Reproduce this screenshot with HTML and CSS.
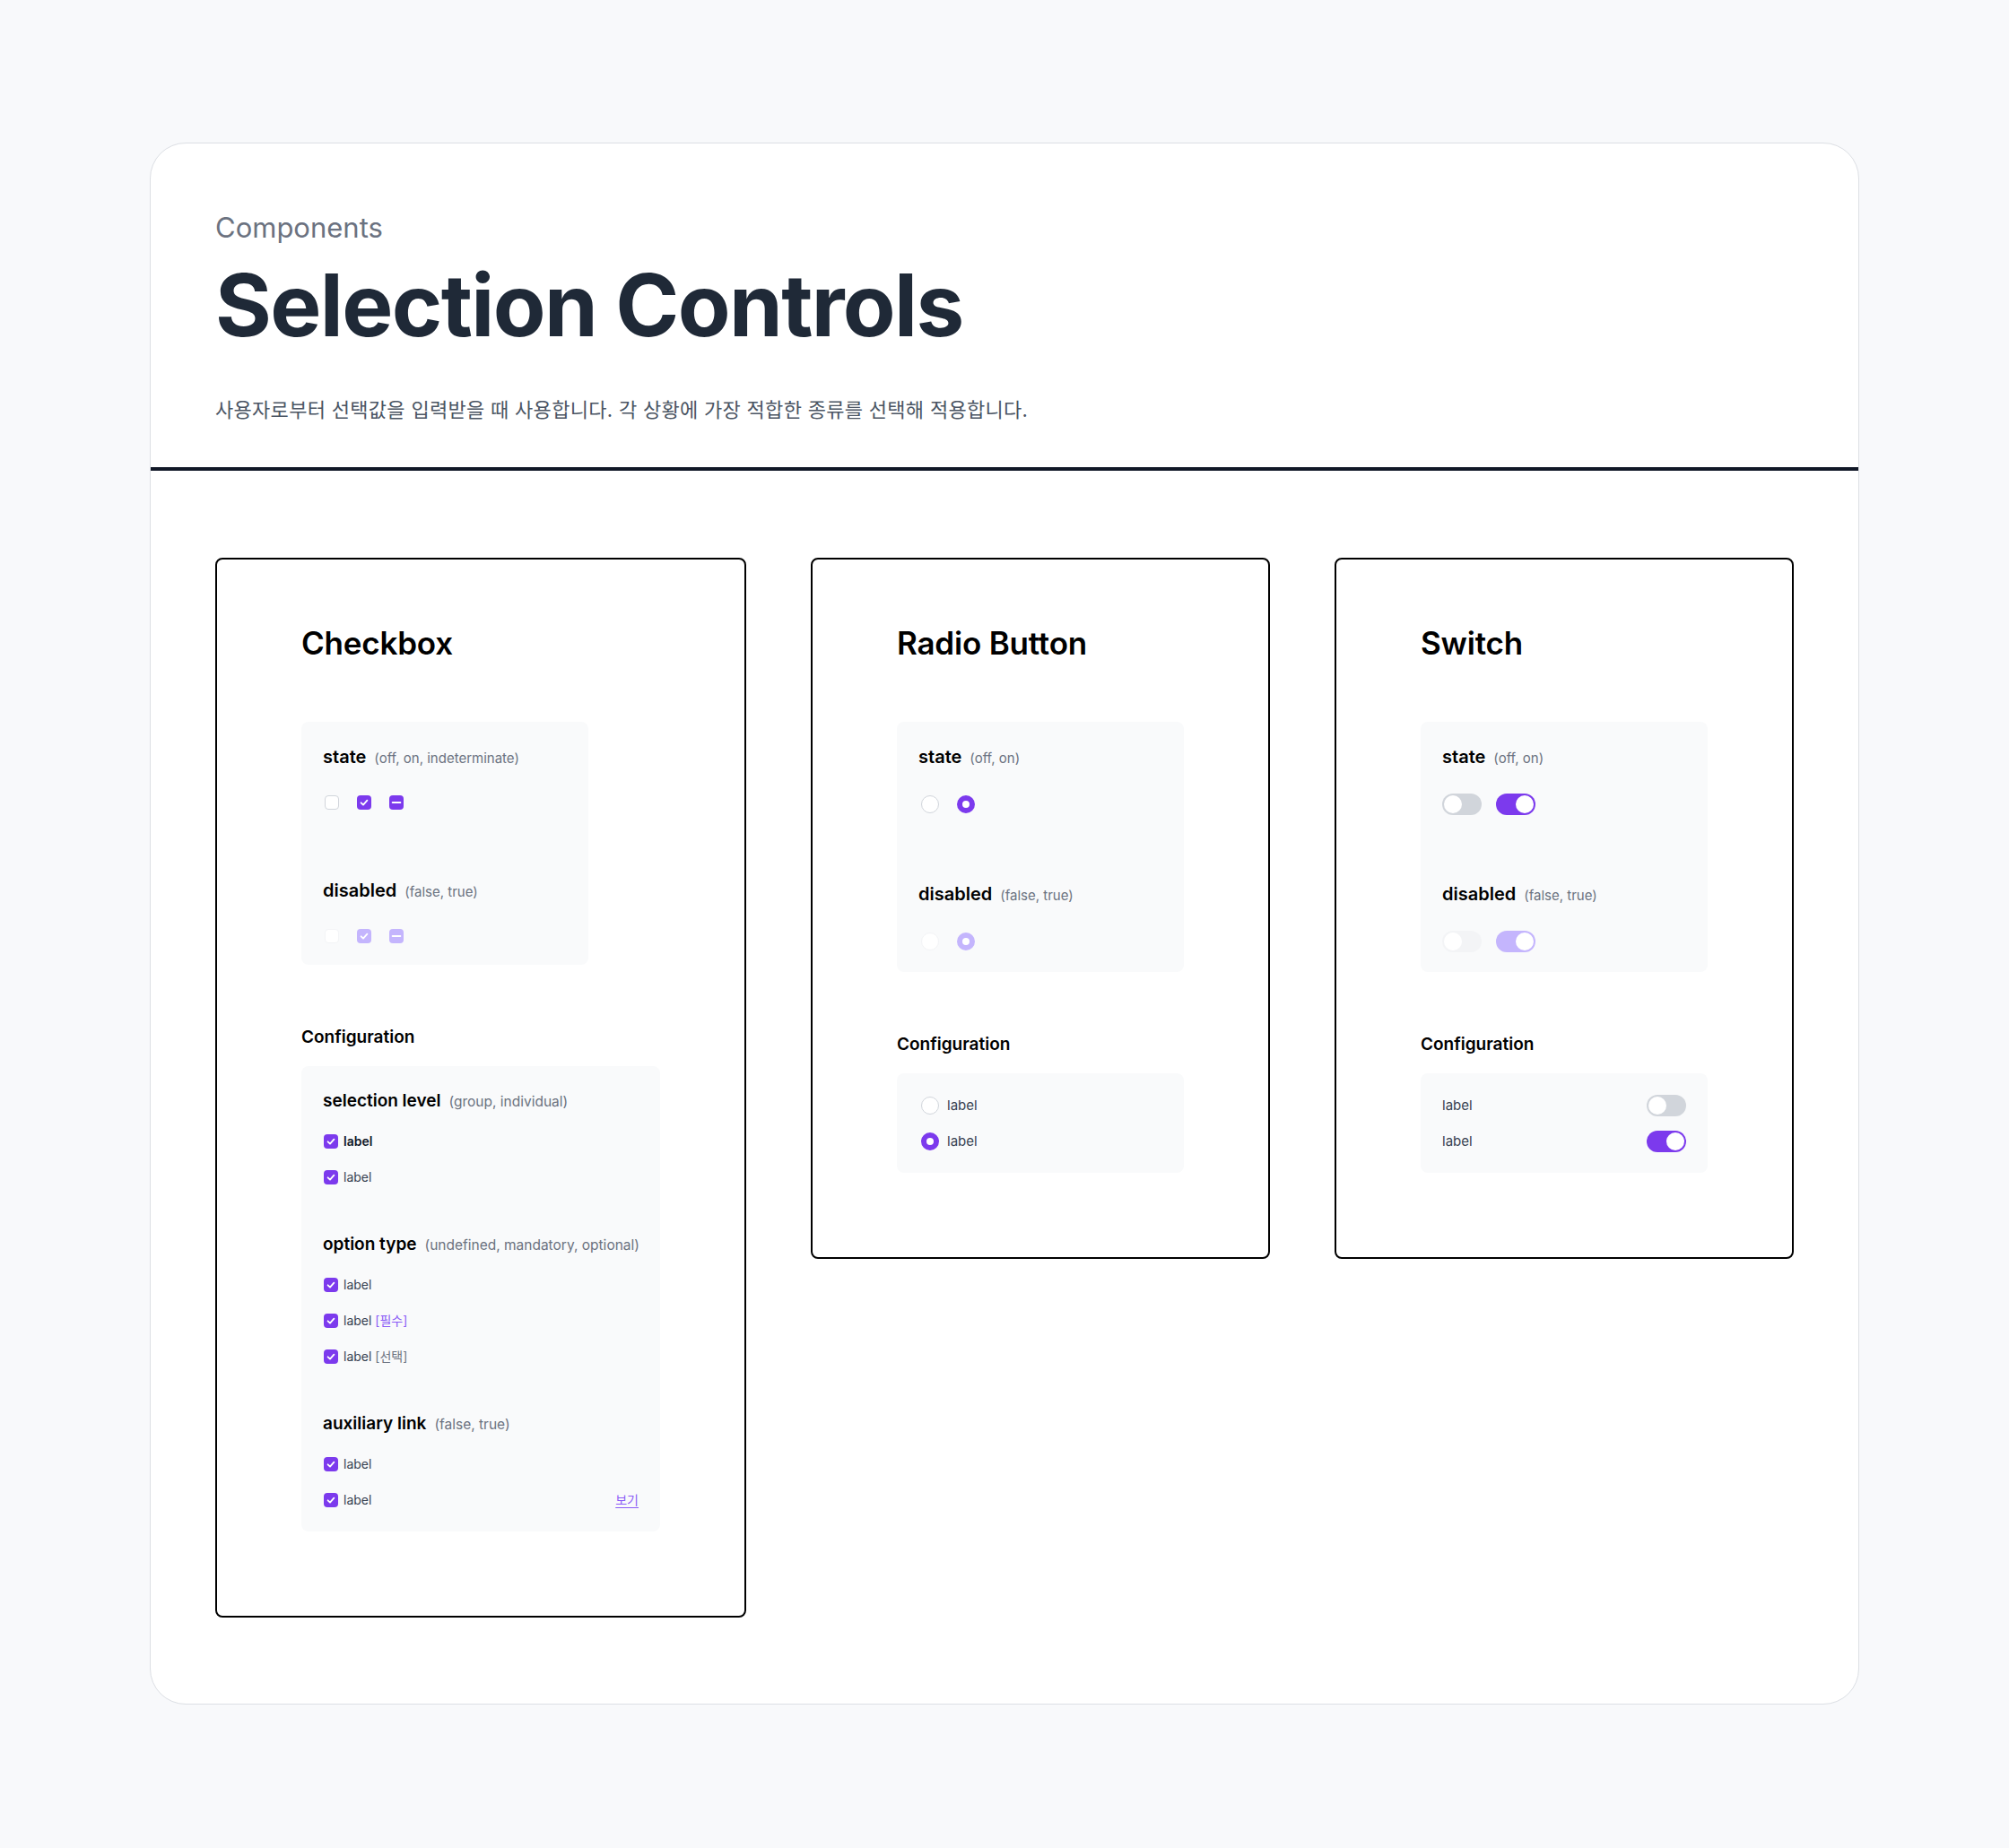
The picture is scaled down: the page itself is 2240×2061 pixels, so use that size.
FILE: index.html
```html
<!DOCTYPE html>
<html lang="ko">
<head>
<meta charset="utf-8">
<title>Selection Controls</title>
<link rel="stylesheet" href="styles.css">
</head>
<body>
<main class="page">
  <header class="header">
    <p class="eyebrow">Components</p>
    <h1 class="title">Selection Controls</h1>
    <p class="desc">사용자로부터 선택값을 입력받을 때 사용합니다. 각 상황에 가장 적합한 종류를 선택해 적용합니다.</p>
  </header>

  <section class="content">
    <!-- Checkbox -->
    <article class="card card-wide">
      <h2 class="card-title">Checkbox</h2>
      <div class="panel panel-state">
        <div class="group">
          <div class="prop">state<span class="vals">(off, on, indeterminate)</span></div>
          <div class="controls controls-cb">
            <span class="cb"></span>
            <span class="cb on"><svg viewBox="0 0 16 16"><path d="M4.6 8.3 7 10.6 11.4 5.7"/></svg></span>
            <span class="cb on"><svg viewBox="0 0 16 16"><path d="M3.6 8h8.8"/></svg></span>
          </div>
        </div>
        <div class="group">
          <div class="prop">disabled<span class="vals">(false, true)</span></div>
          <div class="controls controls-cb">
            <span class="cb dis"></span>
            <span class="cb on dis"><svg viewBox="0 0 16 16"><path d="M4.6 8.3 7 10.6 11.4 5.7"/></svg></span>
            <span class="cb on dis"><svg viewBox="0 0 16 16"><path d="M3.6 8h8.8"/></svg></span>
          </div>
        </div>
      </div>

      <h3 class="section-title">Configuration</h3>
      <div class="panel panel-config panel-config-wide">
        <div class="cgroup">
          <div class="prop prop-c">selection level<span class="vals">(group, individual)</span></div>
          <div class="rows">
            <div class="row"><span class="cb on"><svg viewBox="0 0 16 16"><path d="M4.6 8.3 7 10.6 11.4 5.7"/></svg></span><span class="lbl lbl-strong">label</span></div>
            <div class="row"><span class="cb on"><svg viewBox="0 0 16 16"><path d="M4.6 8.3 7 10.6 11.4 5.7"/></svg></span><span class="lbl">label</span></div>
          </div>
        </div>
        <div class="cgroup">
          <div class="prop prop-c">option type<span class="vals">(undefined, mandatory, optional)</span></div>
          <div class="rows">
            <div class="row"><span class="cb on"><svg viewBox="0 0 16 16"><path d="M4.6 8.3 7 10.6 11.4 5.7"/></svg></span><span class="lbl">label</span></div>
            <div class="row"><span class="cb on"><svg viewBox="0 0 16 16"><path d="M4.6 8.3 7 10.6 11.4 5.7"/></svg></span><span class="lbl">label <span class="tag tag-req">[필수]</span></span></div>
            <div class="row"><span class="cb on"><svg viewBox="0 0 16 16"><path d="M4.6 8.3 7 10.6 11.4 5.7"/></svg></span><span class="lbl">label <span class="tag">[선택]</span></span></div>
          </div>
        </div>
        <div class="cgroup">
          <div class="prop prop-c">auxiliary link<span class="vals">(false, true)</span></div>
          <div class="rows">
            <div class="row"><span class="cb on"><svg viewBox="0 0 16 16"><path d="M4.6 8.3 7 10.6 11.4 5.7"/></svg></span><span class="lbl">label</span></div>
            <div class="row"><span class="cb on"><svg viewBox="0 0 16 16"><path d="M4.6 8.3 7 10.6 11.4 5.7"/></svg></span><span class="lbl">label</span><a class="aux" href="#">보기</a></div>
          </div>
        </div>
      </div>
    </article>

    <!-- Radio -->
    <article class="card">
      <h2 class="card-title">Radio Button</h2>
      <div class="panel panel-state">
        <div class="group">
          <div class="prop">state<span class="vals">(off, on)</span></div>
          <div class="controls controls-lg">
            <span class="radio"></span>
            <span class="radio on"></span>
          </div>
        </div>
        <div class="group">
          <div class="prop">disabled<span class="vals">(false, true)</span></div>
          <div class="controls controls-lg">
            <span class="radio dis"></span>
            <span class="radio on dis"></span>
          </div>
        </div>
      </div>

      <h3 class="section-title">Configuration</h3>
      <div class="panel panel-config">
        <div class="rows">
          <div class="row row-radio"><span class="radio"></span><span class="lbl lbl-lg radio-lbl">label</span></div>
          <div class="row row-radio"><span class="radio on"></span><span class="lbl lbl-lg radio-lbl">label</span></div>
        </div>
      </div>
    </article>

    <!-- Switch -->
    <article class="card">
      <h2 class="card-title">Switch</h2>
      <div class="panel panel-state">
        <div class="group">
          <div class="prop">state<span class="vals">(off, on)</span></div>
          <div class="controls controls-lg controls-sw">
            <span class="switch"></span>
            <span class="switch on"></span>
          </div>
        </div>
        <div class="group">
          <div class="prop">disabled<span class="vals">(false, true)</span></div>
          <div class="controls controls-lg controls-sw">
            <span class="switch dis"></span>
            <span class="switch on dis"></span>
          </div>
        </div>
      </div>

      <h3 class="section-title">Configuration</h3>
      <div class="panel panel-config">
        <div class="rows">
          <div class="row row-split"><span class="lbl lbl-lg">label</span><span class="switch"></span></div>
          <div class="row row-split"><span class="lbl lbl-lg">label</span><span class="switch on"></span></div>
        </div>
      </div>
    </article>
  </section>
</main>
</body>
</html>
```

FILE: styles.css
```css
* {
  box-sizing: border-box;
}

html,
body {
  margin: 0;
}

body {
  background: #f8f9fb;
  font-family: "Inter", "Noto Sans CJK KR", sans-serif;
  padding: 159px 167px 160px;
  color: #000;
}

.page {
  background: #fff;
  border: 1px solid #dcdfe4;
  border-radius: 40px;
  overflow: hidden;
}

/* Header */
.header {
  padding: 75px 72px 47px;
  border-bottom: 4px solid #111827;
}

.eyebrow {
  margin: 0;
  font-size: 31px;
  line-height: 38px;
  color: #6b7280;
}

.title {
  margin: 9px 0 0;
  font-size: 96px;
  line-height: 116px;
  font-weight: 700;
  letter-spacing: -1.6px;
  color: #1f2937;
}

.desc {
  margin: 42px 0 0;
  font-size: 22px;
  line-height: 34px;
  letter-spacing: 0.3px;
  color: #4b5563;
}

/* Cards */
.content {
  display: flex;
  align-items: flex-start;
  gap: 72px;
  padding: 97px 72px 96px;
}

.card {
  width: 512px;
  border: 2px solid #000;
  border-radius: 8px;
  padding: 66px 94px 94px;
}

.card-wide {
  width: 592px;
}

.card-title {
  margin: 0 0 61px;
  font-size: 35px;
  line-height: 54px;
  font-weight: 600;
  letter-spacing: -0.2px;
  color: #000;
}

.panel {
  background: #f9fafb;
  border-radius: 8px;
  padding: 24px 24px 20px;
}

.panel-state {
  width: 320px;
}

.group + .group {
  margin-top: 71px;
}

.prop {
  margin-bottom: 24px;
  font-size: 20px;
  line-height: 30px;
  height: 30px;
  font-weight: 600;
  color: #000;
  white-space: nowrap;
}

.prop-c {
  margin-bottom: 18px;
  font-size: 19px;
}

.vals {
  margin-left: 9px;
  font-size: 15px;
  line-height: 1;
  font-weight: 400;
  color: #6b7280;
}

.prop-c .vals {
  font-size: 15.5px;
}

.controls {
  display: flex;
  align-items: center;
  gap: 20px;
  height: 24px;
  padding-left: 2px;
}

.controls-lg {
  height: 28px;
  padding-left: 3px;
}

.controls-sw {
  gap: 16px;
  padding-left: 0;
}

.section-title {
  margin: 66px 0 17px;
  font-size: 19px;
  line-height: 30px;
  font-weight: 600;
  color: #000;
}

.panel-config {
  width: 320px;
  padding: 24px 24px 23px;
}

.panel-config-wide {
  width: 400px;
}

.cgroup + .cgroup {
  margin-top: 48px;
}

.rows {
  display: flex;
  flex-direction: column;
  gap: 16px;
}

.row {
  display: flex;
  align-items: center;
  height: 24px;
  padding-left: 1px;
}

.row-radio {
  padding-left: 3px;
}

.row-split {
  justify-content: space-between;
  padding-left: 0;
}

.lbl {
  margin-left: 6px;
  font-size: 14px;
  line-height: 20px;
  color: #374151;
}

.row-split .lbl {
  margin-left: 0;
}

.lbl-lg {
  font-size: 15px;
}

.radio-lbl {
  margin-left: 9px;
}

.lbl-strong {
  font-weight: 600;
  color: #111827;
}

.tag {
  color: #6b7280;
}

.tag-req {
  color: #8b5cf6;
}

.aux {
  margin-left: auto;
  font-size: 14px;
  line-height: 20px;
  color: #8b5cf6;
  text-decoration: underline;
  text-underline-offset: 3px;
}

/* Checkbox */
.cb {
  display: inline-flex;
  flex: none;
  width: 16px;
  height: 16px;
  border-radius: 4px;
  background: #fff;
  border: 1px solid #d1d5db;
}

.cb.dis {
  border-color: #f3f4f6;
}

.cb.on {
  background: #7c3aed;
  border: none;
}

.cb.on.dis {
  background: #c4b5fd;
}

.cb svg {
  width: 16px;
  height: 16px;
  fill: none;
  stroke: #fff;
  stroke-width: 1.8;
  stroke-linecap: round;
  stroke-linejoin: round;
}

/* Radio */
.radio {
  flex: none;
  width: 20px;
  height: 20px;
  border-radius: 50%;
  background: #fff;
  border: 1.5px solid #d1d5db;
}

.radio.dis {
  border-color: #f3f4f6;
}

.radio.on {
  border: 6px solid #7c3aed;
}

.radio.on.dis {
  border-color: #c4b5fd;
}

/* Switch */
.switch {
  position: relative;
  flex: none;
  width: 44px;
  height: 24px;
  border-radius: 12px;
  background: #d1d5db;
}

.switch::after {
  content: "";
  position: absolute;
  top: 2px;
  left: 2px;
  width: 20px;
  height: 20px;
  border-radius: 50%;
  background: #fff;
}

.switch.on {
  background: #7c3aed;
}

.switch.on::after {
  left: 22px;
}

.switch.dis {
  background: #f3f4f6;
}

.switch.on.dis {
  background: #c4b5fd;
}
```
